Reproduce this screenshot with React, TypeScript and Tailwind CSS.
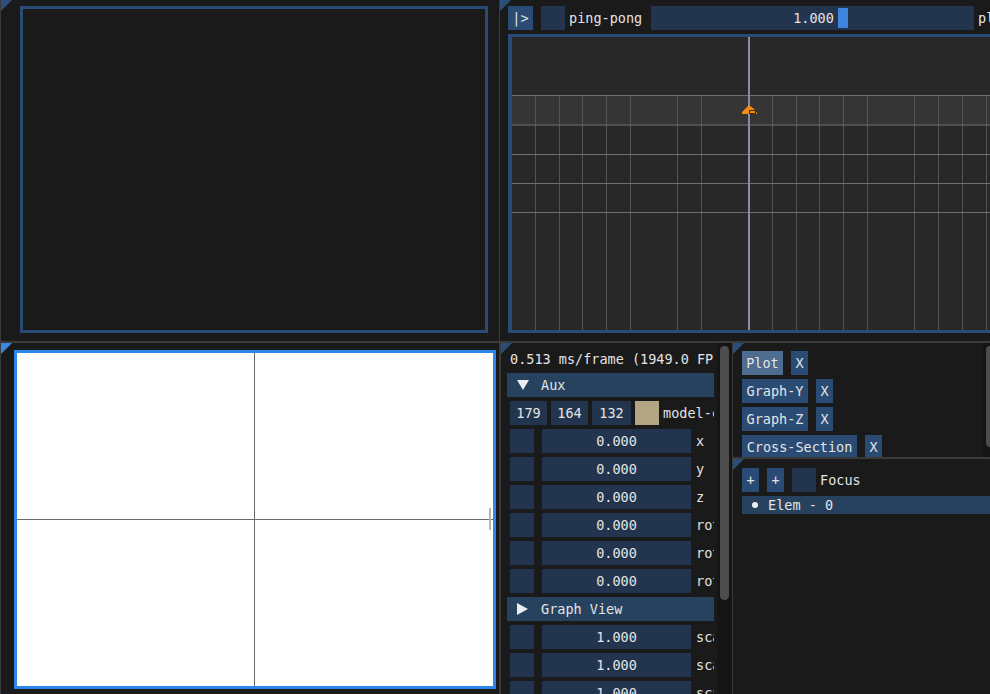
import React from "react";

const FONT = "font-['DejaVu_Sans_Mono',monospace] text-[13.5px] text-[#e4e4e4]";

function Tri({ bright }: { bright?: boolean }) {
  return bright ? (
    <div className="absolute left-0 top-0 w-0 h-0 border-t-[11px] border-r-[11px] border-t-[#3a86e2] border-r-transparent" />
  ) : (
    <div className="absolute left-0 top-0 w-0 h-0 border-t-[11px] border-r-[11px] border-t-[#2b4e7b] border-r-transparent" />
  );
}

function Graph() {
  const vx = [23, 47, 70, 94, 118, 165, 189, 260, 284, 307, 331, 355, 402, 426, 450, 474];
  const hy = [58.5, 88, 117.5, 146.5, 175.5];
  return (
    <svg width="480" height="293" className="block">
      <rect x="0" y="0" width="480" height="293" fill="#282828" />
      <rect x="0" y="58" width="480" height="30" fill="#353535" />
      {vx.map((x) => (
        <line key={x} x1={x + 0.5} y1="58" x2={x + 0.5} y2="293" stroke="#545454" strokeWidth="1" />
      ))}
      {hy.map((y) => (
        <line key={y} x1="0" y1={y} x2="480" y2={y} stroke="#707070" strokeWidth="1" />
      ))}
      <rect x="236" y="0" width="2" height="293" fill="#8b8ba6" />
      <polygon points="230,75 237,68 242,72 245,76 245,77 230,77" fill="#f28b1a" />
      <rect x="237.5" y="73.5" width="6" height="3" fill="none" stroke="#4a2a00" strokeWidth="1" />
    </svg>
  );
}

function DragRow({ value, label }: { value: string; label: string }) {
  return (
    <div className="flex items-center h-[24px] mt-[4px] pl-[3px] shrink-0">
      <div className="w-[24px] h-[24px] bg-[#22344e] shrink-0" />
      <div className="ml-[8px] w-[149px] h-[24px] bg-[#22344e] flex items-center justify-center leading-[24px] shrink-0">
        {value}
      </div>
      <div className="ml-[5px] leading-[24px]">{label}</div>
    </div>
  );
}

function Header({ open, text }: { open: boolean; text: string }) {
  return (
    <div className="h-[24px] mt-[4px] bg-[#27425f] flex items-center shrink-0 w-[207px]">
      <div className="w-[34px] pl-[10px] flex items-center">
        {open ? (
          <svg width="12" height="10">
            <polygon points="0,0 12,0 6,10" fill="#ececec" />
          </svg>
        ) : (
          <svg width="11" height="12">
            <polygon points="0,0 11,6 0,12" fill="#ececec" />
          </svg>
        )}
      </div>
      <div className="leading-[24px]">{text}</div>
    </div>
  );
}

function Btn({ text, active, w }: { text: string; active?: boolean; w?: string }) {
  return (
    <div
      className={
        (active ? "bg-[#4d6c8f] " : "bg-[#2a4c74] ") +
        "h-[24px] px-[4px] leading-[24px] text-center shrink-0 " +
        (w || "")
      }
    >
      {text}
    </div>
  );
}

export default function App() {
  return (
    <div className={"w-[990px] h-[694px] overflow-hidden bg-[#3a3a3a] flex flex-col pl-px " + FONT}>
      {/* top row */}
      <div className="h-[341px] flex shrink-0">
        <div className="relative w-[498px] bg-[#1a1a1a] pl-[19px] pt-[6px] shrink-0">
          <Tri />
          <div className="w-[468px] h-[327px] border-[3px] border-[#2a4b75] bg-[#1a1a1a]" />
        </div>
        <div className="relative ml-px flex-1 bg-[#1a1a1a] pl-[8px] pt-[6px] overflow-hidden">
          <Tri />
          <div className="flex items-center h-[24px] whitespace-nowrap">
            <div className="w-[25px] h-[24px] bg-[#2a4c74] leading-[24px] text-center shrink-0">|&gt;</div>
            <div className="ml-[8px] w-[24px] h-[24px] bg-[#22344e] shrink-0" />
            <div className="ml-[4px] w-[73px] leading-[24px] shrink-0">ping-pong</div>
            <div className="ml-[9px] relative w-[323px] h-[24px] bg-[#22344e] shrink-0 flex items-center justify-center leading-[24px]">
              <span className="pl-[2px]">1.000</span>
              <div className="absolute left-[187px] top-[2px] w-[10px] h-[20px] bg-[#3d85e0]" />
            </div>
            <div className="ml-[4px] leading-[24px]">play</div>
          </div>
          <div className="mt-[4px] w-[490px] h-[299px] border-[3px] border-l-[4px] border-[#2a4b75] bg-[#282828]">
            <Graph />
          </div>
        </div>
      </div>

      {/* bottom row */}
      <div className="mt-[2px] flex-1 flex min-h-0">
        <div className="relative w-[498px] bg-[#1a1a1a] pl-[13px] pt-[7px] shrink-0">
          <Tri bright />
          <div className="relative w-[482px] h-[339px] border-[3px] border-[#2a88ea] bg-white">
            <div className="absolute left-[237px] top-0 bottom-0 w-px bg-[#6a6a6a]" />
            <div className="absolute top-[166px] left-0 right-0 h-px bg-[#6a6a6a]" />
            <div className="absolute left-[472px] top-[155px] w-[2px] h-[22px] bg-[#b4b4b4]" />
          </div>
        </div>

        <div className="relative ml-[2px] w-[231px] bg-[#1a1a1a] shrink-0 overflow-hidden">
          <Tri />
          <div className="ml-[6px] w-[207px] pt-[6px] flex flex-col overflow-hidden whitespace-nowrap">
            <div className="h-[20px] leading-[20px] pl-[3px]">0.513 ms/frame (1949.0 FPS)</div>
            <Header open text="Aux" />
            <div className="flex items-center h-[24px] mt-[4px] pl-[3px] shrink-0">
              <div className="w-[37px] h-[24px] bg-[#22344e] leading-[24px] text-center shrink-0">179</div>
              <div className="ml-[4px] w-[37px] h-[24px] bg-[#22344e] leading-[24px] text-center shrink-0">164</div>
              <div className="ml-[4px] w-[39px] h-[24px] bg-[#22344e] leading-[24px] text-center shrink-0">132</div>
              <div className="ml-[4px] w-[24px] h-[24px] bg-[#b3a484] shrink-0" />
              <div className="ml-[4px] leading-[24px]">model-color</div>
            </div>
            <DragRow value="0.000" label="x" />
            <DragRow value="0.000" label="y" />
            <DragRow value="0.000" label="z" />
            <DragRow value="0.000" label="rot-x" />
            <DragRow value="0.000" label="rot-y" />
            <DragRow value="0.000" label="rot-z" />
            <Header open={false} text="Graph View" />
            <DragRow value="1.000" label="scale-x" />
            <DragRow value="1.000" label="scale-y" />
            <DragRow value="1.000" label="scale-z" />
          </div>
          <div className="absolute left-[216px] top-0 bottom-0 w-[15px] bg-[#151515]" />
          <div className="absolute left-[219px] top-[3px] w-[9px] h-[254px] rounded-full bg-[#4d4d4d]" />
        </div>

        <div className="ml-px flex-1 flex flex-col min-w-0">
          <div className="relative h-[114px] bg-[#1a1a1a] pl-[9px] pt-[8px] overflow-hidden shrink-0">
            <Tri />
            <div className="flex flex-col whitespace-nowrap">
              <div className="flex h-[24px]">
                <Btn text="Plot" active w="w-[41px]" />
                <div className="ml-[8px]"><Btn text="X" w="w-[17px]" /></div>
              </div>
              <div className="flex h-[24px] mt-[4px]">
                <Btn text="Graph-Y" w="w-[66px]" />
                <div className="ml-[8px]"><Btn text="X" w="w-[17px]" /></div>
              </div>
              <div className="flex h-[24px] mt-[4px]">
                <Btn text="Graph-Z" w="w-[66px]" />
                <div className="ml-[8px]"><Btn text="X" w="w-[17px]" /></div>
              </div>
              <div className="flex h-[24px] mt-[4px]">
                <Btn text="Cross-Section" w="w-[115px]" />
                <div className="ml-[8px]"><Btn text="X" w="w-[17px]" /></div>
              </div>
            </div>
            <div className="absolute left-[250px] top-0 bottom-0 w-[8px] bg-[#151515]" />
            <div className="absolute left-[253px] top-[3px] w-[8px] h-[101px] rounded-[4px] bg-[#4d4d4d]" />
          </div>
          <div className="relative mt-[2px] flex-1 bg-[#1a1a1a] pl-[9px] pt-[9px] overflow-hidden">
            <Tri />
            <div className="flex items-center h-[24px] whitespace-nowrap">
              <Btn text="+" w="w-[17px]" />
              <div className="ml-[8px]"><Btn text="+" w="w-[17px]" /></div>
              <div className="ml-[8px] w-[24px] h-[24px] bg-[#22344e] shrink-0" />
              <div className="ml-[4px] leading-[24px]">Focus</div>
            </div>
            <div className="mt-[4px] h-[18px] bg-[#27425f] flex items-center whitespace-nowrap">
              <div className="ml-[10px] w-[6px] h-[6px] rounded-full bg-[#f0f0f0] shrink-0" />
              <div className="ml-[10px] leading-[18px]">Elem - 0</div>
            </div>
          </div>
        </div>
      </div>
    </div>
  );
}
